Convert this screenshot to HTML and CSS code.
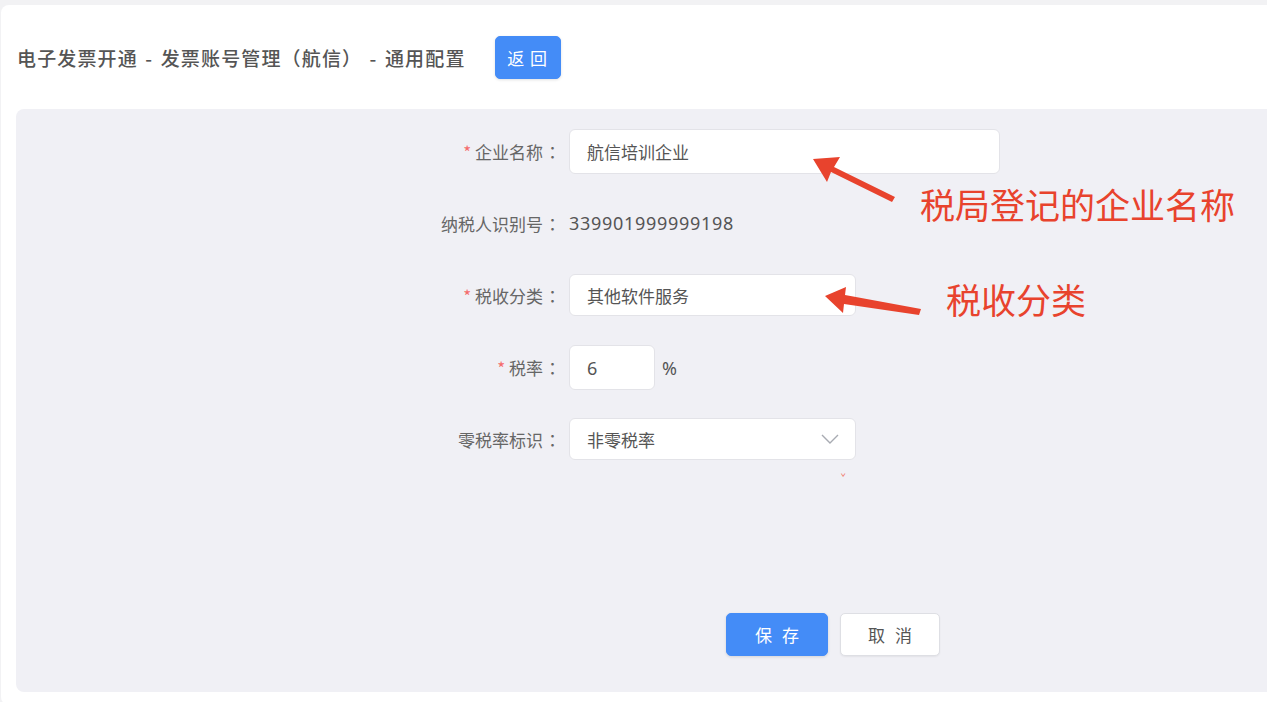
FILE: index.html
```html
<!DOCTYPE html>
<html lang="zh-CN">
<head>
<meta charset="utf-8">
<title>通用配置</title>
<link rel="stylesheet" href="styles.css">
</head>
<body>
<div class="card">
  <div class="header">
    <h1 class="title">电子发票开通 - 发票账号管理（航信） - 通用配置</h1>
    <button class="btn btn-primary btn-back">返 回</button>
  </div>
  <div class="panel">
    <div class="form">
      <div class="row">
        <div class="label"><span class="req">*</span> 企业名称<span class="colon">：</span></div>
        <div class="field"><div class="input w-name">航信培训企业</div></div>
      </div>
      <div class="row">
        <div class="label">纳税人识别号<span class="colon">：</span></div>
        <div class="field"><span class="value">339901999999198</span></div>
      </div>
      <div class="row">
        <div class="label"><span class="req">*</span> 税收分类<span class="colon">：</span></div>
        <div class="field"><div class="input w-mid">其他软件服务</div></div>
      </div>
      <div class="row">
        <div class="label"><span class="req">*</span> 税率<span class="colon">：</span></div>
        <div class="field"><div class="input w-rate num">6</div><span class="unit">%</span></div>
      </div>
      <div class="row">
        <div class="label">零税率标识<span class="colon">：</span></div>
        <div class="field">
          <div class="input w-mid select">
            <span>非零税率</span>
            <svg class="chev" width="18" height="10" viewBox="0 0 18 10"><path d="M1 1 L9 9 L17 1" fill="none" stroke="#a8abb2" stroke-width="1.4"/></svg>
            <span class="tick">ˇ</span>
          </div>
        </div>
      </div>
    </div>
    <div class="actions">
      <button class="btn btn-primary btn-save">保 存</button>
      <button class="btn btn-default btn-cancel">取 消</button>
    </div>
  </div>
</div>

<svg class="arrows" width="1267" height="702" viewBox="0 0 1267 702">
  <polygon fill="#e8432d" points="813,159 840,157 834,167 895,197 892,202 831,172 827,182"/>
  <polygon fill="#e8432d" points="825,296 846,287 845,295 921,309 919,315 844,304 843,313"/>
</svg>
<div class="note note-1">税局登记的企业名称</div>
<div class="note note-2">税收分类</div>
</body>
</html>
```

FILE: styles.css
```css
html, body {
  margin: 0;
  padding: 0;
}
body {
  background: #f2f2f4;
  font-family: "Noto Sans", "Noto Sans CJK SC", sans-serif;
  color: #555;
  width: 1267px;
  height: 702px;
  overflow: hidden;
  position: relative;
}
.card {
  margin: 5px -30px 0 1px;
  background: #ffffff;
  border-radius: 8px;
  padding: 31px 0 10px 15px;
  height: 700px;
  box-sizing: border-box;
}
.header {
  display: flex;
  align-items: center;
  height: 43px;
  margin-left: 1px;
}
.title {
  margin: 0;
  font-family: "Noto Sans CJK SC", sans-serif;
  font-size: 19px;
  font-weight: 500;
  color: #555;
  letter-spacing: 1.15px;
  word-spacing: 2px;
}
.btn {
  font-family: "Noto Sans CJK SC", sans-serif;
  font-size: 16px;
  border-radius: 5px;
  cursor: pointer;
  box-sizing: border-box;
  padding: 0;
}
.btn-primary {
  background: #448cf7;
  color: #fff;
  border: 1px solid #448cf7;
  box-shadow: 0 1px 3px rgba(0, 0, 0, 0.12);
}
.btn-default {
  background: #fff;
  color: #555;
  border: 1px solid #dedfe4;
  box-shadow: 0 1px 2px rgba(0, 0, 0, 0.06);
}
.btn-back {
  margin-left: 29px;
  width: 66px;
  height: 43px;
  font-size: 17px;
  letter-spacing: 1px;
}
.panel {
  margin-top: 30px;
  background: #f0f0f5;
  border-radius: 8px;
  height: 583px;
  padding-top: 20px;
  box-sizing: border-box;
}
.form {
  display: flex;
  flex-direction: column;
  gap: 28px;
}
.row {
  display: grid;
  grid-template-columns: 545px auto;
  column-gap: 8px;
  align-items: center;
  height: 44px;
}
.label {
  text-align: right;
  font-size: 17px;
  color: #666;
  font-family: "Noto Sans CJK SC", sans-serif;
  white-space: nowrap;
}
.colon {
  font-family: "Noto Sans CJK TC", sans-serif;
  display: inline-block;
  width: 17px;
  text-align: center;
  margin-left: 1px;
}
.req {
  color: #f56c6c;
}
.field {
  display: flex;
  align-items: center;
}
.input {
  background: #fff;
  border: 1px solid #e3e3e8;
  border-radius: 6px;
  height: 44px;
  box-sizing: border-box;
  padding-left: 17px;
  display: flex;
  align-items: center;
  font-size: 17px;
  color: #555;
  font-family: "Noto Sans CJK SC", sans-serif;
}
.input.num {
  font-family: "Noto Sans", sans-serif;
  font-size: 18px;
}
.w-name { width: 431px; height: 45px; }
.w-mid { width: 287px; height: 42px; }
.w-rate { width: 86px; height: 45px; }
.select {
  position: relative;
  justify-content: space-between;
  padding-right: 16px;
}
.chev {
  display: block;
}
.tick {
  position: absolute;
  right: 9px;
  top: 54px;
  font-size: 9px;
  color: #f07060;
  line-height: 1;
}
.value {
  font-family: "Noto Sans", sans-serif;
  font-size: 18px;
  letter-spacing: 0.7px;
  color: #555;
}
.unit {
  margin-left: 7px;
  font-family: "Noto Sans", sans-serif;
  font-size: 18px;
  color: #555;
}
.actions {
  display: flex;
  gap: 12px;
  margin-top: 152px;
  padding-left: 710px;
}
.btn-save {
  width: 102px;
  height: 43px;
  font-size: 17px;
  letter-spacing: 3px;
  text-indent: 3px;
}
.btn-cancel {
  width: 100px;
  height: 43px;
  font-size: 17px;
  letter-spacing: 3px;
  text-indent: 3px;
}
.arrows {
  position: absolute;
  left: 0;
  top: 0;
  pointer-events: none;
}
.note {
  position: absolute;
  font-family: "Noto Sans CJK SC", sans-serif;
  font-size: 35px;
  color: #e8432d;
  line-height: 1;
  white-space: nowrap;
}
.note-1 {
  left: 920px;
  top: 186px;
}
.note-2 {
  left: 946px;
  top: 281px;
}
```
